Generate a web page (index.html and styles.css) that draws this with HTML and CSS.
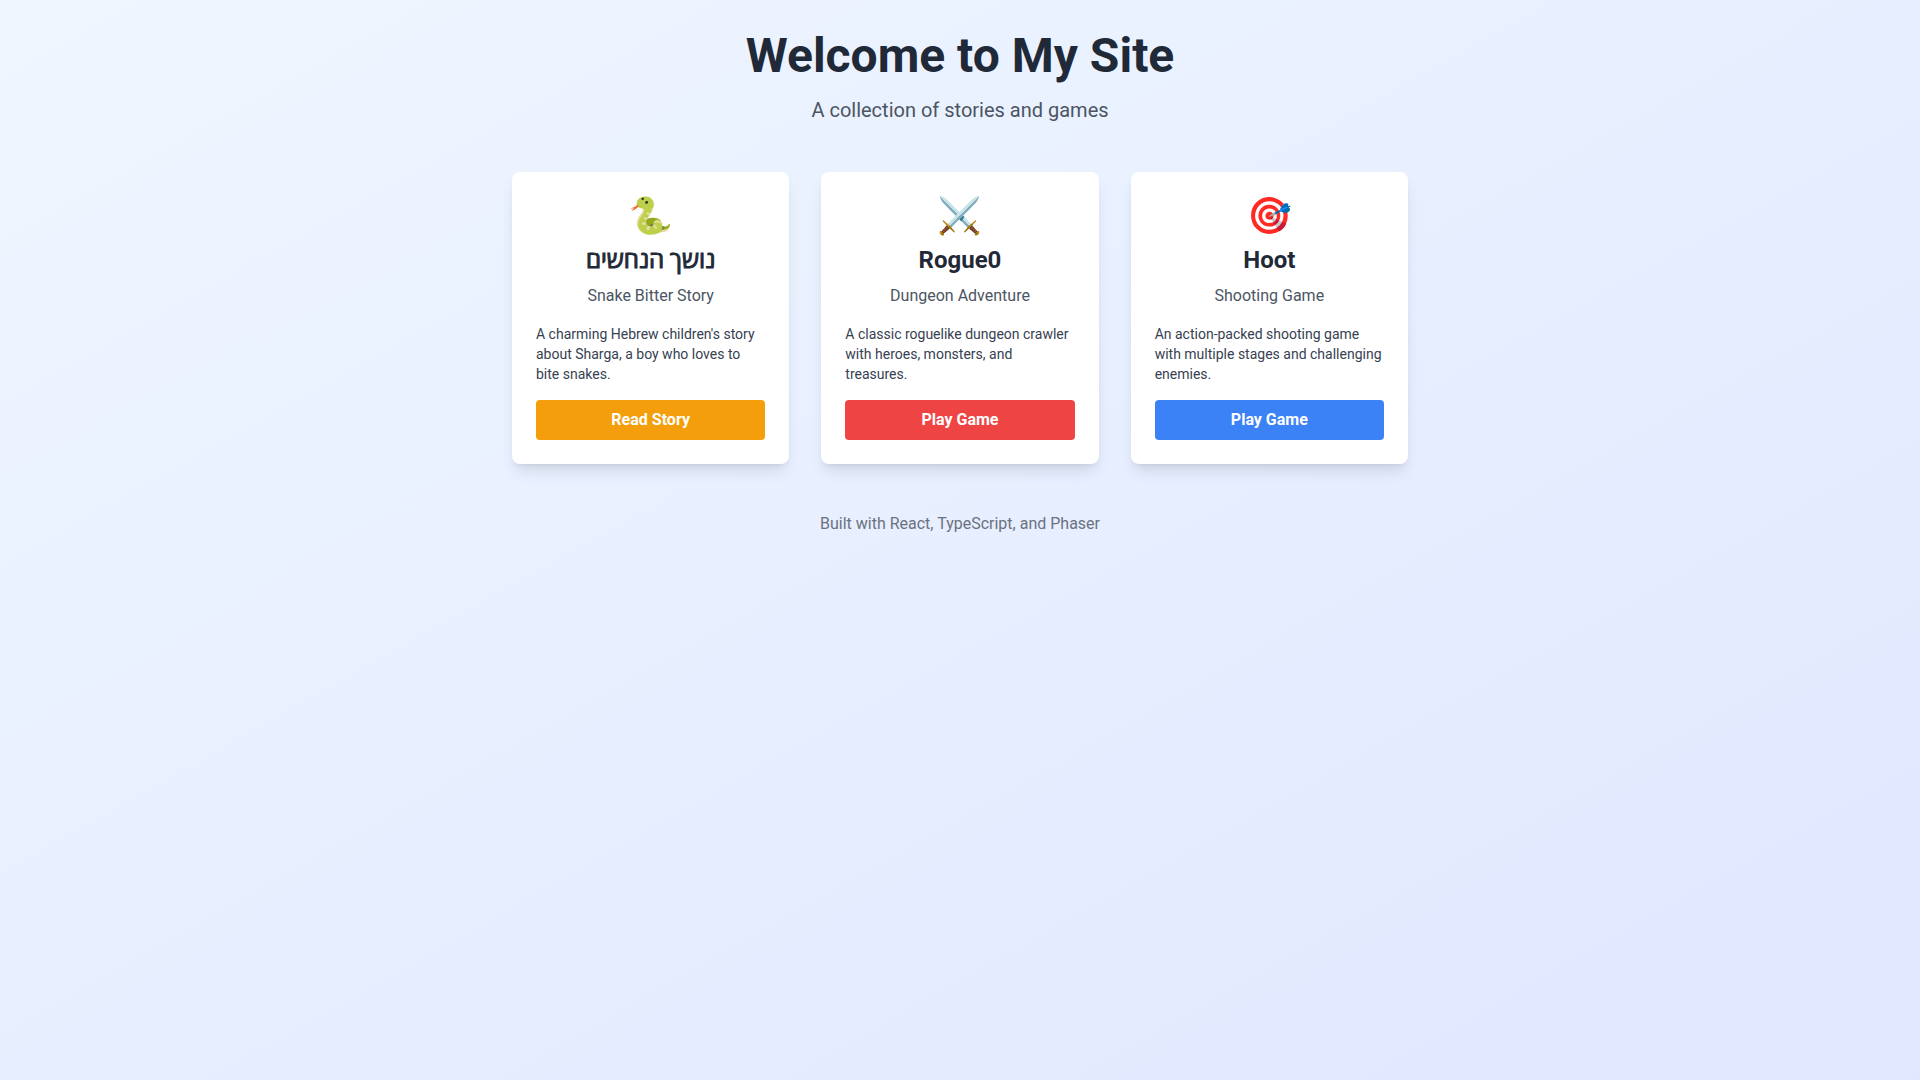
FILE: index.html
```html
<!DOCTYPE html>
<html lang="en">
<head>
<meta charset="utf-8">
<meta name="viewport" content="width=device-width, initial-scale=1">
<title>Welcome to My Site</title>
<link rel="stylesheet" href="styles.css">
</head>
<body>
<div class="page">
  <header class="header">
    <h1 class="title">Welcome to My Site</h1>
    <p class="subtitle">A collection of stories and games</p>
  </header>
  <main class="cards">
    <article class="card">
      <div class="card-head">
        <div class="icon">🐍</div>
        <h2 class="card-title hebrew" lang="he">נושך הנחשים</h2>
        <p class="card-subtitle">Snake Bitter Story</p>
      </div>
      <p class="card-text">A charming Hebrew children's story about Sharga, a boy who loves to bite snakes.</p>
      <button class="button story" type="button">Read Story</button>
    </article>
    <article class="card">
      <div class="card-head">
        <div class="icon">⚔️</div>
        <h2 class="card-title">Rogue0</h2>
        <p class="card-subtitle">Dungeon Adventure</p>
      </div>
      <p class="card-text">A classic roguelike dungeon crawler with heroes, monsters, and treasures.</p>
      <button class="button rogue" type="button">Play Game</button>
    </article>
    <article class="card">
      <div class="card-head">
        <div class="icon">🎯</div>
        <h2 class="card-title">Hoot</h2>
        <p class="card-subtitle">Shooting Game</p>
      </div>
      <p class="card-text">An action-packed shooting game with multiple stages and challenging enemies.</p>
      <button class="button hoot" type="button">Play Game</button>
    </article>
  </main>
  <footer class="footer">Built with React, TypeScript, and Phaser</footer>
</div>
</body>
</html>
```
FILE: styles.css
```css
*,
*::before,
*::after {
  box-sizing: border-box;
}

body,
h1,
h2,
p {
  margin: 0;
}

body {
  font-family: Roboto, "Open Sans", sans-serif;
  font-size: 16px;
  line-height: 24px;
}

.page {
  min-height: 100vh;
  padding: 32px 16px;
  background: linear-gradient(to bottom right, #eff6ff, #e0e7ff);
}

.header {
  margin-bottom: 48px;
  text-align: center;
}

.title {
  margin-bottom: 16px;
  font-size: 48px;
  line-height: 48px;
  font-weight: 700;
  color: #1f2937;
}

.subtitle {
  font-size: 20px;
  line-height: 28px;
  color: #4b5563;
}

.cards {
  display: grid;
  grid-template-columns: repeat(3, 1fr);
  gap: 32px;
  max-width: 896px;
  margin: 0 auto;
}

.card {
  padding: 24px;
  border-radius: 8px;
  background: #fff;
  box-shadow: 0 10px 15px -3px rgba(0, 0, 0, 0.1), 0 4px 6px -4px rgba(0, 0, 0, 0.1);
}

.card-head {
  margin-bottom: 16px;
  text-align: center;
}

.icon {
  margin-bottom: 8px;
  font-size: 36px;
  line-height: 40px;
}

.card-title {
  margin-bottom: 8px;
  font-size: 24px;
  line-height: 32px;
  font-weight: 700;
  color: #1f2937;
}

/* Hebrew headings use the regular cut, thickened by an outline */
.hebrew {
  font-weight: 400;
  -webkit-text-stroke: 1px currentColor;
}

.card-subtitle {
  color: #4b5563;
}

.card-text {
  margin-bottom: 16px;
  font-size: 14px;
  line-height: 20px;
  color: #374151;
}

.button {
  display: block;
  width: 100%;
  padding: 8px 16px;
  border: 0;
  border-radius: 4px;
  font: inherit;
  font-weight: 700;
  color: #fff;
  cursor: pointer;
}

.story {
  background: #f59e0b;
}

.rogue {
  background: #ef4444;
}

.hoot {
  background: #3b82f6;
}

.footer {
  margin-top: 48px;
  text-align: center;
  color: #6b7280;
}

@media (max-width: 767px) {
  .cards {
    grid-template-columns: 1fr;
  }
}
```
